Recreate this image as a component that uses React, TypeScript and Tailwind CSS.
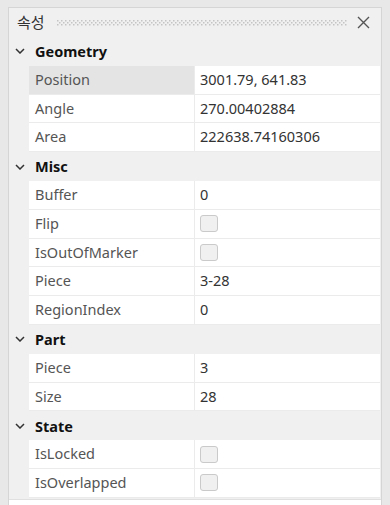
import React from "react";

type Row = { name: string; value?: string; check?: boolean; selected?: boolean };
type Section = { title: string; rows: Row[] };

const sections: Section[] = [
  {
    title: "Geometry",
    rows: [
      { name: "Position", value: "3001.79, 641.83", selected: true },
      { name: "Angle", value: "270.00402884" },
      { name: "Area", value: "222638.74160306" },
    ],
  },
  {
    title: "Misc",
    rows: [
      { name: "Buffer", value: "0" },
      { name: "Flip", check: true },
      { name: "IsOutOfMarker", check: true },
      { name: "Piece", value: "3-28" },
      { name: "RegionIndex", value: "0" },
    ],
  },
  {
    title: "Part",
    rows: [
      { name: "Piece", value: "3" },
      { name: "Size", value: "28" },
    ],
  },
  {
    title: "State",
    rows: [
      { name: "IsLocked", check: true },
      { name: "IsOverlapped", check: true },
    ],
  },
];

function Chevron() {
  return (
    <svg width="10" height="6" viewBox="0 0 10 6" className="shrink-0">
      <path d="M1 1 L5 5 L9 1" fill="none" stroke="#333" strokeWidth="1.5" />
    </svg>
  );
}

function Grip() {
  return (
    <svg className="flex-1 h-[6px]" height="6">
      <defs>
        <pattern id="grip" width="4" height="4" patternUnits="userSpaceOnUse">
          <rect x="0" y="0" width="1.5" height="1.5" fill="#c4c4c4" />
          <rect x="2" y="2" width="1.5" height="1.5" fill="#c4c4c4" />
        </pattern>
      </defs>
      <rect width="100%" height="6" fill="url(#grip)" />
    </svg>
  );
}

function CloseIcon() {
  return (
    <svg width="13" height="13" viewBox="0 0 13 13">
      <path d="M1 1 L12 12 M12 1 L1 12" stroke="#555" strokeWidth="1.4" fill="none" />
    </svg>
  );
}

export default function App() {
  return (
    <div
      className="w-[390px] h-[505px] bg-[#e8e8e8] pl-[8px] pt-[7px] pr-[8px] overflow-hidden"
      style={{ fontFamily: '"Noto Sans", "Noto Sans CJK KR", sans-serif' }}
    >
      <div className="h-[600px] border border-[#d5d5d5] bg-[#f0f0f0] flex flex-col">
        <div className="h-[29px] flex items-center pl-[8px] pr-[6px] shrink-0">
          <span className="text-[15px] text-[#333] leading-none mr-[12px] -mt-[1px]">속성</span>
          <Grip />
          <div className="ml-[10px] mr-[5px] flex items-center">
            <CloseIcon />
          </div>
        </div>
        {sections.map((s) => (
          <div key={s.title} className="flex flex-col">
            <div className="h-[28.8px] flex items-center pl-[6px]">
              <Chevron />
              <span className="ml-[10px] text-[14.5px] font-bold text-[#111] leading-none">{s.title}</span>
            </div>
            {s.rows.map((r, i) => (
              <div key={i} className="h-[28.8px] flex pr-[1px]">
                <div className="w-[20px] shrink-0" />
                <div
                  className={
                    "w-[166px] shrink-0 flex items-center pl-[6px] border-b border-r border-[#ebebeb] text-[14.5px] text-[#555] " +
                    (r.selected ? "bg-[#e4e4e4]" : "bg-white")
                  }
                >
                  {r.name}
                </div>
                <div className="flex-1 flex items-center pl-[5px] bg-white border-b border-[#ebebeb] text-[14.5px] text-[#333]">
                  {r.check ? (
                    <div className="w-[18px] h-[17px] rounded-[3px] border border-[#cacaca] bg-[#f0f0f0]" />
                  ) : (
                    r.value
                  )}
                </div>
              </div>
            ))}
          </div>
        ))}
        <div className="mt-[1px] border-t border-[#e0e0e0] bg-white flex-1" />
      </div>
    </div>
  );
}
